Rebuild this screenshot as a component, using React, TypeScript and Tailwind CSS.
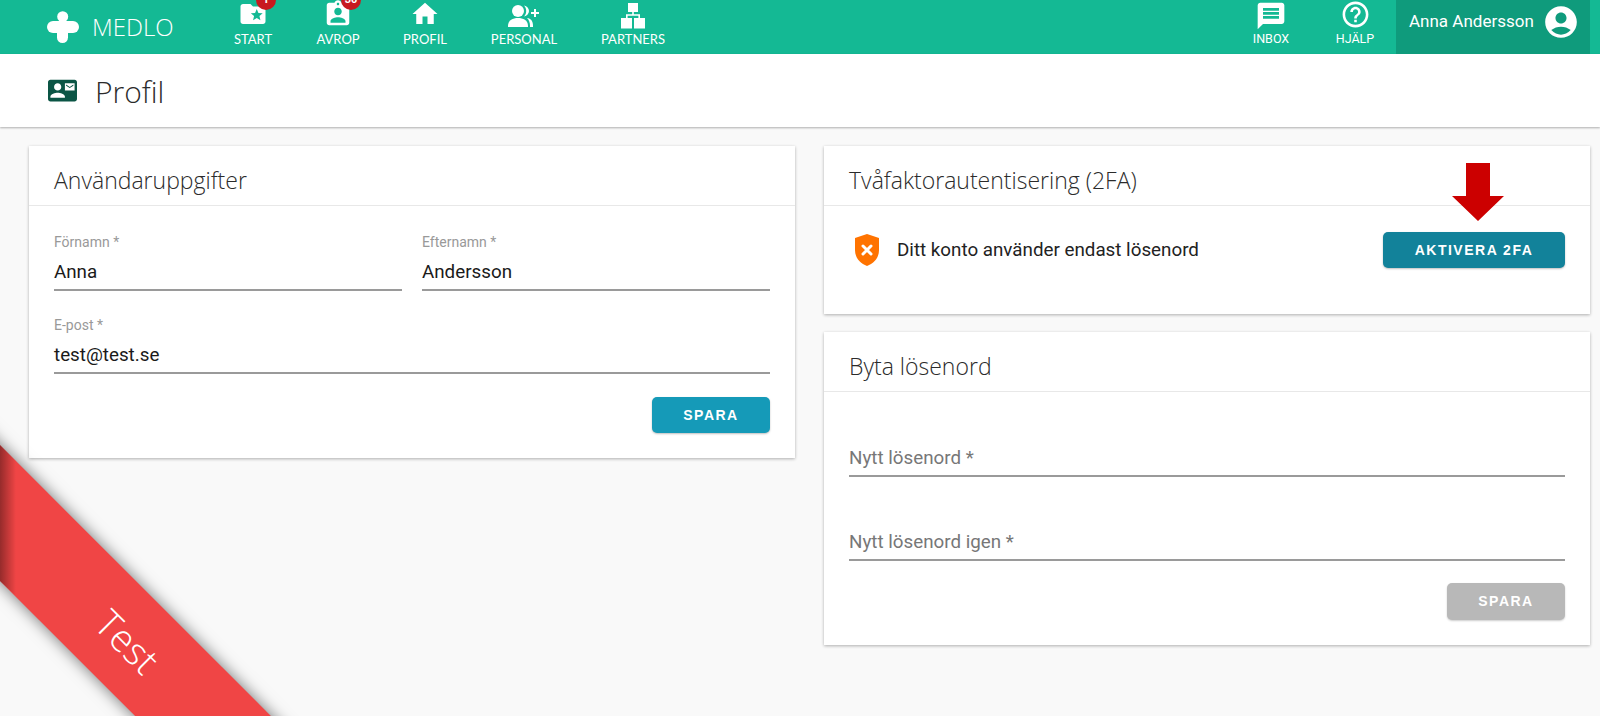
import {
  MdAccountCircle,
  MdAssignmentInd,
  MdContactMail,
  MdFolderSpecial,
  MdHelpOutline,
  MdHome,
  MdMessage,
} from 'react-icons/md';
import type { ReactNode } from 'react';

const headingFont = "font-['Open_Sans',sans-serif]";
const navFont = "font-['Lato',sans-serif]";
const bodyFont = "font-['Roboto',sans-serif]";

function PersonalIcon() {
  return (
    <svg viewBox="0 0 32 26" className="h-[26px] w-[32px]" fill="currentColor">
      <circle cx="10" cy="8" r="6" />
      <path d="M0 23c0-6 5-8 10-8s10 2 10 8v1H0z" />
      <path d="M16 2.500c3 .5 5 3 5 5.500s-2 5-5 5.500c1.500-1.500 2.200-3.500 2.200-5.500S17.500 4 16 2.500z" />
      <path d="M19 15c4 .5 6 3 6 8v1h-3v-1c0-3.500-1-6-3-8z" />
      <path d="M26 6h2v3h3v2h-3v3h-2v-3h-3V9h3z" />
    </svg>
  );
}

function PartnersIcon() {
  return (
    <svg viewBox="0 0 24 26" className="h-[26px] w-[24px]" fill="currentColor">
      <rect x="7" y="0" width="10" height="9" />
      <rect x="0" y="15" width="11" height="10.500" />
      <rect x="13" y="15" width="11" height="10.500" />
      <path d="M11.200 9h1.600v2.200H19V15h-1.600v-2.200H6.600V15H5v-3.800h6.200z" />
    </svg>
  );
}

function NavItem({
  label,
  icon,
  badge,
  className,
  labelClass,
}: {
  label: string;
  icon: ReactNode;
  badge?: string;
  className?: string;
  labelClass?: string;
}) {
  return (
    <div className={`flex h-[54px] flex-col items-center ${className ?? ''}`}>
      <div className="relative flex h-[29px] items-end">
        {icon}
        {badge && (
          <span className="absolute -top-[10px] left-[18px] flex h-[20px] min-w-[20px] items-center justify-center rounded-full bg-[#c8191f] text-[11px] font-bold text-white">
            {badge}
          </span>
        )}
      </div>
      <span className={`mt-[2px] leading-[16px] text-white ${labelClass ?? `${navFont} text-[13px]`}`}>{label}</span>
    </div>
  );
}

function Field({ label, value, className }: { label: string; value: string; className?: string }) {
  return (
    <div className={className}>
      <div className="text-[14px] leading-[16px] text-[#999999]">{label}</div>
      <div className="h-[41px] border-b-2 border-[#9a9a9a] pt-[10px] text-[18.800px] leading-[24px] text-[#1a1a1a]">
        {value}
      </div>
    </div>
  );
}

function EmptyField({ label }: { label: string }) {
  return (
    <div className="h-[36px] border-b-2 border-[#9a9a9a] pt-[5px] text-[18.800px] leading-[24px] text-[#777777]">
      {label}
    </div>
  );
}

function Card({ title, children, className }: { title: string; children: ReactNode; className?: string }) {
  return (
    <section className={`bg-white shadow-[0_1px_3px_rgba(0,0,0,0.3)] ${className ?? ''}`}>
      <h2 className={`${headingFont} h-[60px] border-b border-[#e8e8e8] px-[25px] pt-[20px] text-[23px] leading-[28px] font-light text-[#2b2b2b]`}>
        {title}
      </h2>
      {children}
    </section>
  );
}

export default function App() {
  return (
    <div className={`${bodyFont} relative h-[716px] w-[1600px] overflow-hidden bg-[#f9f9f9]`}>
      {/* Header */}
      <header className="flex h-[54px] bg-[#14b994] text-white">
        <div className="flex w-[232px] items-center pl-[47px]">
          <svg viewBox="0 0 32 32" className="h-[32px] w-[32px]" fill="currentColor">
            <circle cx="15.700" cy="5.700" r="5.500" />
            <rect x="0" y="10" width="32" height="12" rx="6" />
            <rect x="10" y="12" width="11" height="20" rx="5.500" />
          </svg>
          <span className={`${headingFont} ml-[13px] text-[24px] font-light`}>MEDLO</span>
        </div>
        <nav className="flex">
          <NavItem className="ml-[1px] w-[40px]" label="START" badge="1" icon={<MdFolderSpecial size={30} />} />
          <NavItem className="ml-[45px] w-[40px]" label="AVROP" badge="30" icon={<MdAssignmentInd size={30} />} />
          <NavItem className="ml-[46px] w-[42px]" label="PROFIL" icon={<MdHome size={30} />} />
          <NavItem className="ml-[46px] w-[64px]" label="PERSONAL" icon={<PersonalIcon />} />
          <NavItem className="ml-[45px] w-[64px]" label="PARTNERS" icon={<PartnersIcon />} />
        </nav>
        <div className="ml-auto flex">
          <NavItem
            className="w-[40px]"
            label="INBOX"
            labelClass="text-[12.500px]"
            icon={<MdMessage size={32} className="translate-y-[3px]" />}
          />
          <NavItem
            className="ml-[45px] w-[38px]"
            label="HJÄLP"
            labelClass="text-[12.500px]"
            icon={<MdHelpOutline size={31} className="translate-y-[1px]" />}
          />
          <div className="ml-[22px] flex w-[194px] items-center bg-[#0f9b7c] pl-[13px]">
            <span className="-mt-[10px] text-[17px]">Anna Andersson</span>
            <MdAccountCircle size={38} className="ml-[8px] -mt-[10px]" />
          </div>
          <div className="w-[10px]" />
        </div>
      </header>

      {/* Page title */}
      <div className="flex h-[73px] items-center bg-white pl-[48px] shadow-[0_1px_2px_rgba(0,0,0,0.3)]">
        <MdContactMail size={29} className="text-[#0b5545]" />
        <h1 className={`${headingFont} ml-[18px] pt-[1px] text-[30px] font-light text-[#2b2b2b]`}>Profil</h1>
      </div>

      {/* Cards */}
      <main className="flex gap-[29px] pt-[19px] pl-[29px]">
        <div className="w-[766px]">
          <Card title="Användaruppgifter" className="h-[312px]">
            <div className="px-[25px] pt-[28px]">
              <div className="flex gap-[20px]">
                <Field className="w-[348px]" label="Förnamn *" value="Anna" />
                <Field className="w-[348px]" label="Efternamn *" value="Andersson" />
              </div>
              <Field className="mt-[26px]" label="E-post *" value="test@test.se" />
              <div className="mt-[23px] flex justify-end">
                <button className="h-[36px] w-[118px] rounded-[5px] bg-[#159ab8] font-['Liberation_Sans',sans-serif] text-[14px] font-bold tracking-[1.500px] text-white shadow-[0_1px_2px_rgba(0,0,0,0.25)]">
                  SPARA
                </button>
              </div>
            </div>
          </Card>
        </div>
        <div className="flex w-[766px] flex-col gap-[18px]">
          <Card title="Tvåfaktorautentisering (2FA)" className="h-[168px]">
            <div className="flex items-center px-[25px] pt-[26px]">
              <svg viewBox="0 0 24 32" className="ml-[5px] h-[32px] w-[26px]">
                <path fill="#ff7300" d="M12 0l12 4v12c0 8-5 13-12 16C5 29 0 24 0 16V4z" />
                <path stroke="#ffffff" strokeWidth="3" strokeLinecap="round" d="M8 12l8 8M16 12l-8 8" />
              </svg>
              <span className="ml-[17px] text-[18.800px] text-[#222222]">Ditt konto använder endast lösenord</span>
              <button className="ml-auto h-[36px] w-[182px] rounded-[5px] bg-[#12829a] font-['Liberation_Sans',sans-serif] text-[14px] font-bold tracking-[1.500px] text-white shadow-[0_1px_2px_rgba(0,0,0,0.25)]">
                AKTIVERA 2FA
              </button>
            </div>
          </Card>
          <Card title="Byta lösenord" className="h-[313px]">
            <div className="px-[25px] pt-[49px]">
              <EmptyField label="Nytt lösenord *" />
              <div className="mt-[48px]">
                <EmptyField label="Nytt lösenord igen *" />
              </div>
              <div className="mt-[22px] flex justify-end">
                <button className="h-[37px] w-[118px] rounded-[5px] bg-[#b8b8b8] font-['Liberation_Sans',sans-serif] text-[14px] font-bold tracking-[1.500px] text-white shadow-[0_1px_2px_rgba(0,0,0,0.2)]">
                  SPARA
                </button>
              </div>
            </div>
          </Card>
        </div>
      </main>

      {/* Annotation arrow */}
      <svg viewBox="0 0 52 58" className="absolute top-[163px] left-[1452px] h-[58px] w-[52px]">
        <path fill="#cc0000" d="M14 0h24v33h14L26 58 0 33h14z" />
      </svg>

      {/* Test ribbon */}
      <div className="pointer-events-none absolute bottom-0 left-0 h-[340px] w-[300px] overflow-hidden">
        <div className={`${headingFont} absolute top-[239px] -left-[150px] flex h-[96px] w-[600px] rotate-45 items-center justify-center bg-[#f04545] pr-[62px] text-[38px] font-light text-white shadow-[0_0_16px_rgba(0,0,0,0.55)]`}>
          Test
        </div>
        <div className="absolute top-[69px] left-0 h-[151px] w-[16px] bg-gradient-to-r from-[#00000060] to-transparent [clip-path:polygon(0_0,100%_16px,100%_100%,0_136px)]" />
      </div>
    </div>
  );
}
